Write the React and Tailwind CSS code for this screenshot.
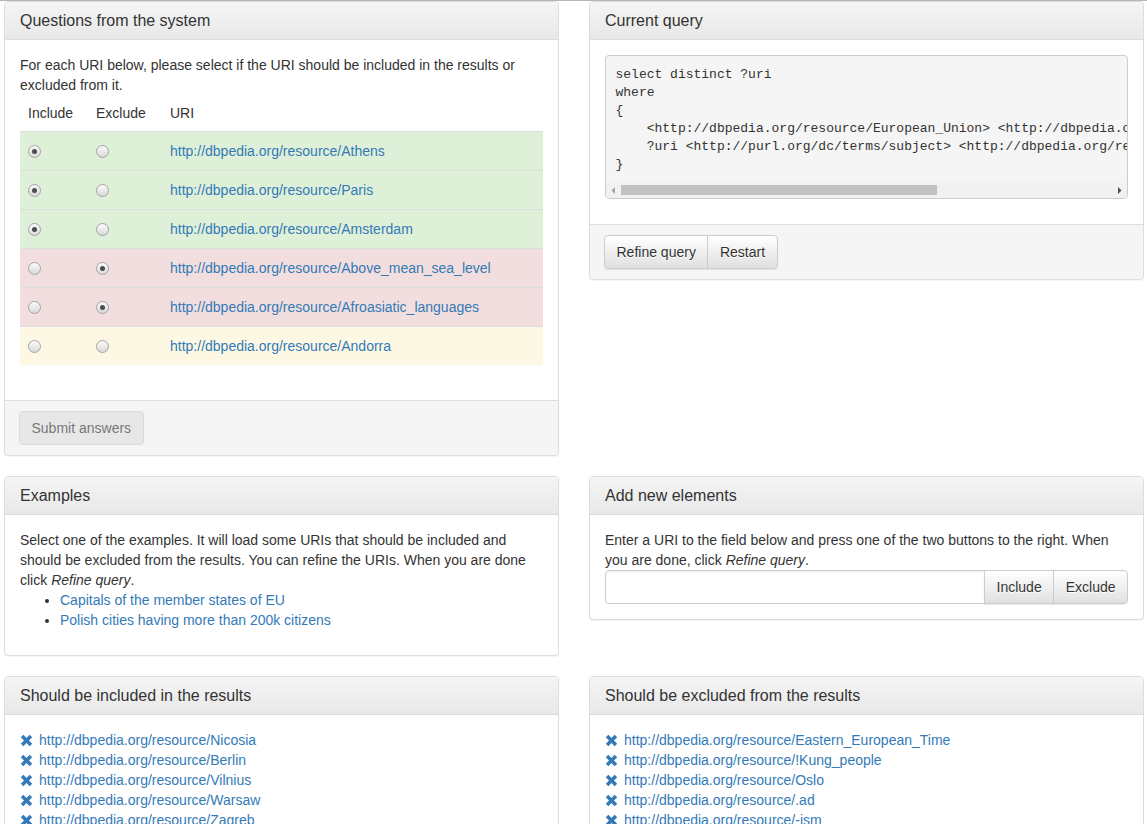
import React from "react";

const font = "font-['Liberation_Sans',Arial,Helvetica,sans-serif]";

function Panel({ title, children, footer }) {
  return (
    <div className="rounded-[4px] border border-[#ddd] bg-white shadow-[0_1px_1px_rgba(0,0,0,0.05)]">
      <div className="rounded-t-[3px] border-b border-[#ddd] bg-[linear-gradient(to_bottom,#f5f5f5,#e8e8e8)] px-[15px] py-[10px] text-[16px] leading-[17px] text-[#333]">
        {title}
      </div>
      <div className="p-[15px]">{children}</div>
      {footer && (
        <div className="rounded-b-[3px] border-t border-[#ddd] bg-[#f5f5f5] py-[10px] pl-[14px] pr-[15px]">
          {footer}
        </div>
      )}
    </div>
  );
}

function Radio({ checked }) {
  return (
    <span className="inline-flex h-[13px] w-[13px] items-center justify-center rounded-full border border-[#a3a3a3] bg-[linear-gradient(to_bottom,#fbfbfb,#d9d9d9)]">
      {checked && <span className="h-[5px] w-[5px] rounded-full bg-[#4d4d4d]" />}
    </span>
  );
}

function Btn({ children, className = "" }) {
  return (
    <button
      type="button"
      className={
        "h-[34px] border border-[#ccc] bg-[linear-gradient(to_bottom,#ffffff,#e0e0e0)] px-[11.5px] text-[14px] leading-5 text-[#333] [text-shadow:0_1px_0_#fff] shadow-[inset_0_1px_0_rgba(255,255,255,0.15),0_1px_1px_rgba(0,0,0,0.075)] " +
        className
      }
    >
      {children}
    </button>
  );
}

function RemoveIcon() {
  return (
    <svg width="13" height="13" viewBox="0 0 13 13" className="shrink-0">
      <path
        d="M0.8 3.3 L3.3 0.8 L6.5 4 L9.7 0.8 L12.2 3.3 L9 6.5 L12.2 9.7 L9.7 12.2 L6.5 9 L3.3 12.2 L0.8 9.7 L4 6.5 Z"
        fill="#337ab7"
      />
    </svg>
  );
}

const rows = [
  { uri: "Athens", state: "inc" },
  { uri: "Paris", state: "inc" },
  { uri: "Amsterdam", state: "inc" },
  { uri: "Above_mean_sea_level", state: "exc" },
  { uri: "Afroasiatic_languages", state: "exc" },
  { uri: "Andorra", state: "none" },
];

const rowBg = {
  inc: "bg-[#dff0d8]",
  exc: "bg-[#f2dede]",
  none: "bg-[#fcf8e3]",
};

const included = ["Nicosia", "Berlin", "Vilnius", "Warsaw", "Zagreb", "Rome", "Madrid"];
const excluded = ["Eastern_European_Time", "!Kung_people", "Oslo", ".ad", "-ism", "Bern", "Moscow"];

const query = `select distinct ?uri
where
{
    <http://dbpedia.org/resource/European_Union> <http://dbpedia.org/ontology/wikiPageWikiLink> ?uri .
    ?uri <http://purl.org/dc/terms/subject> <http://dbpedia.org/resource/Category:Capitals_in_Europe> .
}`;

export default function App() {
  return (
    <div className={`${font} h-[824px] overflow-hidden bg-white text-[14px] leading-5 text-[#333]`}>
      <div className="h-px bg-[#b5b5b5]" />
      <div className="grid grid-cols-[555px_555px] items-start gap-x-[30px] gap-y-5 pl-1">
        {/* Questions */}
        <Panel
          title="Questions from the system"
          footer={
            <button
              type="button"
              disabled
              className="h-[34px] rounded-[4px] border border-[#ccc] bg-[#e0e0e0] px-[11.5px] text-[14px] leading-5 text-[#333] opacity-65"
            >
              Submit answers
            </button>
          }
        >
          <div>
            For each URI below, please select if the URI should be included in the results or
            excluded from it.
          </div>
          <div className="mb-5">
            <div className="flex h-[36px] items-center">
              <div className="w-[68px] pl-2">Include</div>
              <div className="w-[74px] pl-2">Exclude</div>
              <div className="flex-1 pl-2">URI</div>
            </div>
            {rows.map((r) => (
              <div
                key={r.uri}
                className={`flex h-[39px] items-center border-t border-[#ddd] ${rowBg[r.state]}`}
              >
                <div className="flex w-[68px] pl-2">
                  <Radio checked={r.state === "inc"} />
                </div>
                <div className="flex w-[74px] pl-2">
                  <Radio checked={r.state === "exc"} />
                </div>
                <div className="flex-1 pl-2">
                  <a href="#" className="text-[#337ab7]">
                    http://dbpedia.org/resource/{r.uri}
                  </a>
                </div>
              </div>
            ))}
          </div>
        </Panel>

        {/* Current query */}
        <Panel
          title="Current query"
          footer={
            <div className="flex">
              <Btn className="rounded-l-[4px]">Refine query</Btn>
              <Btn className="-ml-px rounded-r-[4px]">Restart</Btn>
            </div>
          }
        >
          <div className="mb-[10px] overflow-hidden rounded-[4px] border border-[#ccc] bg-[#f5f5f5]">
            <pre className="overflow-hidden whitespace-pre px-[9.5px] pt-[9.5px] pb-[9px] font-['Liberation_Mono','Courier_New',monospace] text-[13px] leading-[18px] text-[#333]">
              {query}
            </pre>
            <div className="flex h-[15px] items-center bg-[#f1f1f1]">
              <div className="flex h-[15px] w-[15px] items-center justify-center">
                <svg width="5" height="7" viewBox="0 0 5 7">
                  <path d="M4 0 L0.5 3.5 L4 7 Z" fill="#a3a3a3" />
                </svg>
              </div>
              <div className="h-[10px] w-[316px] bg-[#c1c1c1]" />
              <div className="flex-1" />
              <div className="flex h-[15px] w-[15px] items-center justify-center">
                <svg width="5" height="7" viewBox="0 0 5 7">
                  <path d="M1 0 L4.5 3.5 L1 7 Z" fill="#505050" />
                </svg>
              </div>
            </div>
          </div>
        </Panel>

        {/* Examples */}
        <Panel title="Examples">
          <div>
            Select one of the examples. It will load some URIs that should be included and
            should be excluded from the results. You can refine the URIs. When you are done
            click <em>Refine query</em>.
          </div>
          <ul className="mb-[10px] list-disc pl-10">
            <li>
              <a href="#" className="text-[#337ab7]">
                Capitals of the member states of EU
              </a>
            </li>
            <li>
              <a href="#" className="text-[#337ab7]">
                Polish cities having more than 200k citizens
              </a>
            </li>
          </ul>
        </Panel>

        {/* Add new elements */}
        <Panel title="Add new elements">
          <div>
            Enter a URI to the field below and press one of the two buttons to the right. When
            you are done, click <em>Refine query</em>.
          </div>
          <div className="flex h-[34px]">
            <input
              type="text"
              className="h-[34px] min-w-0 flex-1 rounded-l-[4px] border border-[#ccc] bg-white px-3 text-[14px] shadow-[inset_0_1px_1px_rgba(0,0,0,0.075)] outline-none"
            />
            <Btn className="-ml-px">Include</Btn>
            <Btn className="-ml-px rounded-r-[4px]">Exclude</Btn>
          </div>
        </Panel>

        {/* Included */}
        <Panel title="Should be included in the results">
          {included.map((u) => (
            <div key={u} className="flex h-5 items-center gap-[6px]">
              <RemoveIcon />
              <a href="#" className="text-[#337ab7]">
                http://dbpedia.org/resource/{u}
              </a>
            </div>
          ))}
        </Panel>

        {/* Excluded */}
        <Panel title="Should be excluded from the results">
          {excluded.map((u) => (
            <div key={u} className="flex h-5 items-center gap-[6px]">
              <RemoveIcon />
              <a href="#" className="text-[#337ab7]">
                http://dbpedia.org/resource/{u}
              </a>
            </div>
          ))}
        </Panel>
      </div>
    </div>
  );
}
